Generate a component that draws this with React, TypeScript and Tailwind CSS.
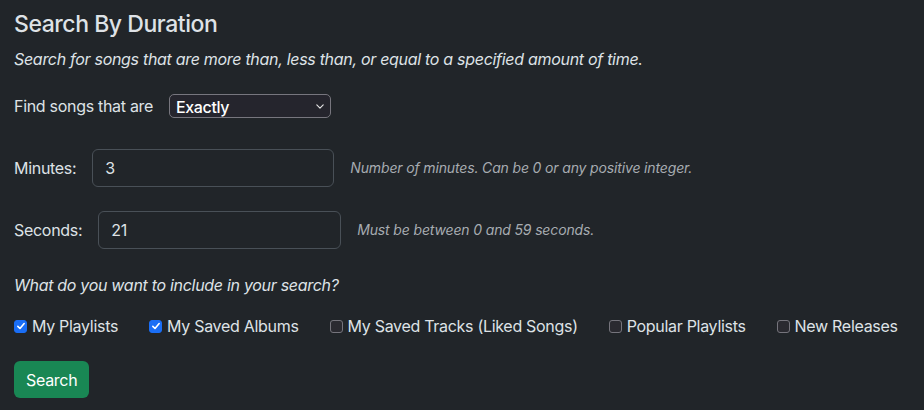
import { useState } from 'react'

const sources = [
  { id: 'playlists', label: 'My Playlists', checked: true },
  { id: 'albums', label: 'My Saved Albums', checked: true },
  { id: 'tracks', label: 'My Saved Tracks (Liked Songs)', checked: false },
  { id: 'popular', label: 'Popular Playlists', checked: false },
  { id: 'releases', label: 'New Releases', checked: false },
]

function Checkbox({ checked, onChange }: { checked: boolean; onChange: () => void }) {
  return (
    <button
      type="button"
      onClick={onChange}
      className={`flex h-[13px] w-[13px] shrink-0 items-center justify-center rounded-[3px] border ${
        checked ? 'border-[#1a6ef5] bg-[#1a6ef5]' : 'border-[#75747c] bg-[#2a2a30]'
      }`}
    >
      {checked && (
        <svg viewBox="0 0 12 12" className="h-[10px] w-[10px]" fill="none">
          <path d="M2.2 6.4 L4.8 9 L9.8 3" stroke="white" strokeWidth="1.9" strokeLinecap="round" strokeLinejoin="round" />
        </svg>
      )}
    </button>
  )
}

export default function App() {
  const [mode, setMode] = useState('exactly')
  const [minutes, setMinutes] = useState('3')
  const [seconds, setSeconds] = useState('21')
  const [checked, setChecked] = useState(sources.map((s) => s.checked))

  return (
    <div className="min-h-[410px] bg-[#212529] px-[14px] pt-[10px] text-[16px] leading-6 tracking-[-0.3px] text-[#dee2e6] font-['Inter',sans-serif]">
      <h4 className="text-[23px] font-medium leading-[29px] tracking-[-0.45px]">Search By Duration</h4>
      <p className="mt-2 italic">
        Search for songs that are more than, less than, or equal to a specified amount of time.
      </p>

      {/* Comparison select */}
      <div className="mt-[23px] flex h-6 items-center gap-4">
        <span>Find songs that are</span>
        <div className="relative">
          <select
            value={mode}
            onChange={(e) => setMode(e.target.value)}
            className="h-6 w-[162px] appearance-none rounded-[5px] border border-[#77767e] bg-[#25252d] pl-[6px] text-[16px] font-medium tracking-[-0.4px] text-white outline-none"
          >
            <option value="more">More than</option>
            <option value="less">Less than</option>
            <option value="exactly">Exactly</option>
          </select>
          <svg
            viewBox="0 0 10 6"
            className="pointer-events-none absolute right-[7px] top-[10px] h-[5px] w-[8px]"
            fill="none"
          >
            <path d="M1 1 L5 5 L9 1" stroke="#e5e5e5" strokeWidth="1.4" strokeLinecap="round" strokeLinejoin="round" />
          </svg>
        </div>
      </div>

      {/* Minutes */}
      <div className="mt-[31px] flex items-center gap-4">
        <label htmlFor="minutes">Minutes:</label>
        <input
          id="minutes"
          value={minutes}
          onChange={(e) => setMinutes(e.target.value)}
          className="h-[38px] w-[242px] rounded-[6px] border border-[#495057] bg-[#212529] px-3 text-[#dee2e6] outline-none"
        />
        <span className="text-[14px] italic tracking-[-0.15px] text-[#a7acb1]">
          Number of minutes. Can be 0 or any positive integer.
        </span>
      </div>

      {/* Seconds */}
      <div className="mt-[24px] flex items-center gap-4">
        <label htmlFor="seconds">Seconds:</label>
        <input
          id="seconds"
          value={seconds}
          onChange={(e) => setSeconds(e.target.value)}
          className="h-[38px] w-[243px] rounded-[6px] border border-[#495057] bg-[#212529] px-3 text-[#dee2e6] outline-none"
        />
        <span className="text-[14px] italic tracking-[-0.15px] text-[#a7acb1]">Must be between 0 and 59 seconds.</span>
      </div>

      <p className="mt-[24px] italic">What do you want to include in your search?</p>

      {/* Sources */}
      <div className="mt-[17px] flex items-center gap-[31px] whitespace-nowrap">
        {sources.map((s, i) => (
          <label key={s.id} className="flex items-center gap-[5px]">
            <Checkbox
              checked={checked[i]}
              onChange={() => setChecked(checked.map((c, j) => (j === i ? !c : c)))}
            />
            <span>{s.label}</span>
          </label>
        ))}
      </div>

      <button className="mt-[23px] h-[37px] rounded-[6px] bg-[#198754] px-3 text-white">Search</button>
    </div>
  )
}
